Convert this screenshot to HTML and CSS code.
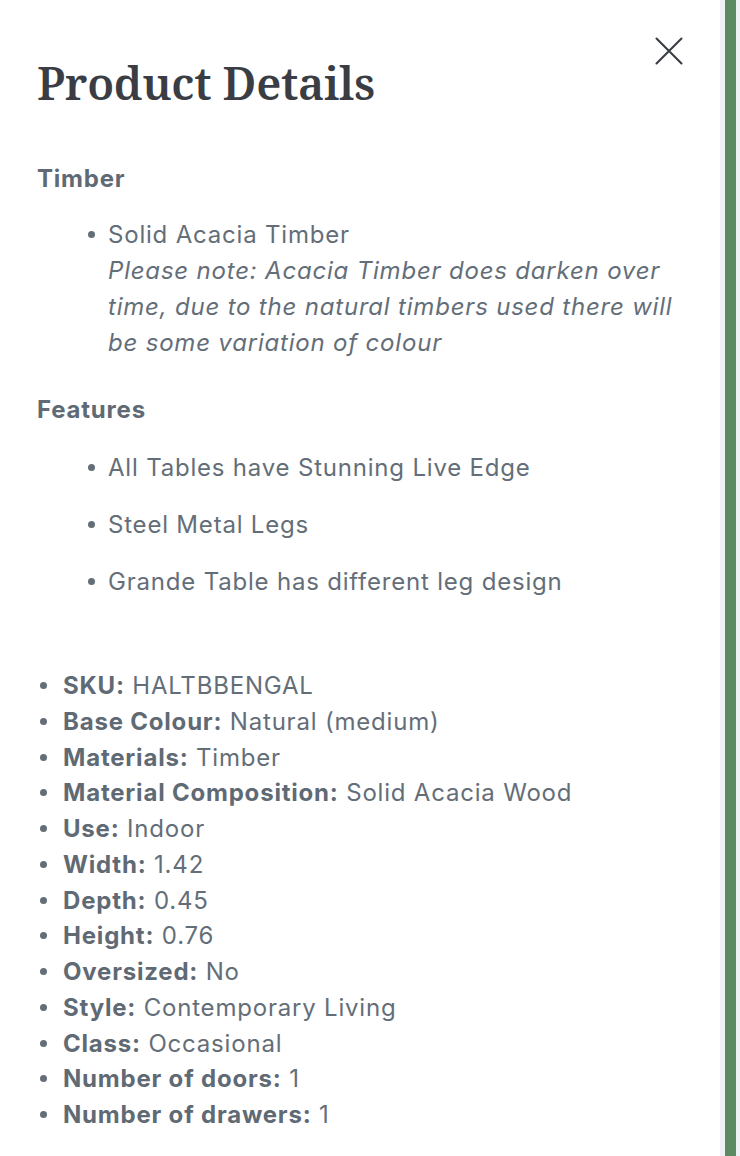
FILE: index.html
```html
<!DOCTYPE html>
<html lang="en">
<head>
<meta charset="utf-8">
<title>Product Details</title>
<link rel="stylesheet" href="styles.css">
</head>
<body>
<div class="page">
  <aside class="panel">
    <button class="close" aria-label="Close">
      <svg width="28" height="28" viewBox="0 0 28 28" fill="none" stroke="#3a3e44" stroke-width="2.1" stroke-linecap="round"><path d="M1.5 1.5 L26.5 26.5 M26.5 1.5 L1.5 26.5"/></svg>
    </button>
    <h1 class="title">Product Details</h1>

    <section class="group">
      <h2 class="group-title">Timber</h2>
      <ul class="features">
        <li><span>Solid Acacia Timber<br><em class="note">Please note: Acacia Timber does darken over time, due to the natural timbers used there will be some variation of colour</em></span></li>
      </ul>
    </section>

    <section class="group">
      <h2 class="group-title">Features</h2>
      <ul class="features spaced">
        <li><span>All Tables have Stunning Live Edge</span></li>
        <li><span>Steel Metal Legs</span></li>
        <li><span>Grande Table has different leg design</span></li>
      </ul>
    </section>

    <ul class="specs">
      <li><span><strong>SKU:</strong> HALTBBENGAL</span></li>
      <li><span><strong>Base Colour:</strong> Natural (medium)</span></li>
      <li><span><strong>Materials:</strong> Timber</span></li>
      <li><span><strong>Material Composition:</strong> Solid Acacia Wood</span></li>
      <li><span><strong>Use:</strong> Indoor</span></li>
      <li><span><strong>Width:</strong> 1.42</span></li>
      <li><span><strong>Depth:</strong> 0.45</span></li>
      <li><span><strong>Height:</strong> 0.76</span></li>
      <li><span><strong>Oversized:</strong> No</span></li>
      <li><span><strong>Style:</strong> Contemporary Living</span></li>
      <li><span><strong>Class:</strong> Occasional</span></li>
      <li><span><strong>Number of doors:</strong> 1</span></li>
      <li><span><strong>Number of drawers:</strong> 1</span></li>
    </ul>
  </aside>
  <div class="rail"></div>
</div>
</body>
</html>
```
FILE: styles.css
```css
html, body {
  margin: 0;
  padding: 0;
}
body {
  background: #eef2f5;
  font-family: Inter, "Liberation Sans", sans-serif;
  color: #646e78;
  letter-spacing: 0.8px;
}
.page {
  display: flex;
  height: 1156px;
  overflow: hidden;
}
.panel {
  position: relative;
  width: 720px;
  flex: none;
  background: #ffffff;
  box-sizing: border-box;
  padding: 0 37px 0 37px;
}
.rail {
  width: 11px;
  margin-left: 5px;
  background: #5b8a63;
  flex: none;
}
.close {
  position: absolute;
  top: 37px;
  left: 655px;
  width: 28px;
  height: 28px;
  padding: 0;
  border: 0;
  background: none;
}
.close svg { display: block; }
.title {
  margin: 0;
  padding-top: 55px;
  font-family: "Noto Serif", "Liberation Serif", serif;
  font-weight: 600;
  font-size: 45px;
  line-height: 56px;
  color: #3a3e44;
  letter-spacing: -0.3px;
}
.group-title {
  margin: 0;
  font-size: 24px;
  line-height: 36px;
  font-weight: 700;
  color: #5f6a75;
}
.group:first-of-type .group-title { margin-top: 50px; }
.group + .group .group-title { margin-top: 31px; }

.features,
.specs {
  list-style: none;
  font-size: 24px;
}
.features li,
.specs li {
  display: flex;
  align-items: flex-start;
}
.features li::before,
.specs li::before {
  content: "";
  flex: none;
  width: 7px;
  height: 7px;
  margin-top: 14px;
  border-radius: 50%;
  background: #646e78;
}
.features {
  margin: 20px 0 0;
  padding-left: 51px;
  line-height: 36px;
}
.features li::before { margin-right: 13px; }
.features.spaced { margin-top: 22px; }
.features.spaced li + li { margin-top: 21px; }
.note {
  font-style: italic;
}
.specs {
  margin: 68px 0 0;
  padding-left: 3px;
  line-height: 35.75px;
}
.specs li::before { margin-right: 16px; }
.specs strong {
  font-weight: 700;
  color: #5f6a75;
}
```
